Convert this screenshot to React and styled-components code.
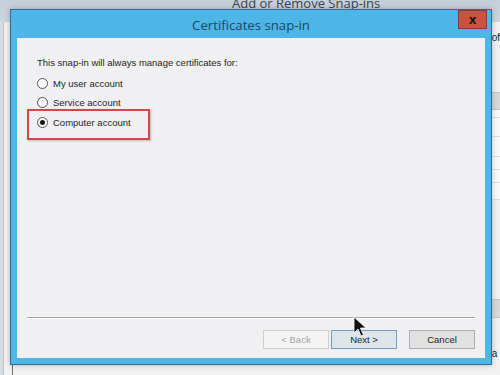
import styled, { createGlobalStyle } from "styled-components"

const GlobalStyle = createGlobalStyle`
    html, body {
        margin: 0;
        padding: 0;
        background: #eef0f2;
        font-family: "Liberation Sans", Arial, sans-serif;
    }
`

const Desktop = styled.div`
    position: relative;
    width: 500px;
    height: 375px;
    overflow: hidden;
    display: flex;
    flex-direction: column;
    background: #d6dde3;
`

const ParentTitleBar = styled.div`
    height: 22px;
    flex-shrink: 0;
    background: linear-gradient(#c4cfd9, #cdd6de);
    overflow: hidden;
`

const ParentTitle = styled.div`
    margin: -6px 0 0 232px;
    font-family: "Open Sans", "Noto Sans", sans-serif;
    font-size: 13px;
    line-height: 18px;
    color: #3a4550;
    white-space: nowrap;
`

const ParentBody = styled.div`
    flex: 1;
    display: flex;
    margin-left: 3px;
    border-left: 1px solid #b9c2ca;
    background: #f2f2f2;
`

const InnerPane = styled.div`
    width: 480px;
    margin-left: 8px;
    border-left: 1px solid #6f6f6f;
`

const RightPane = styled.div`
    flex: 1;
    display: flex;
    flex-direction: column;
    font-size: 10px;
    color: #222;
`

const SideText = styled.div`
    margin-top: ${(p) => p.$top}px;
    height: 12px;
    line-height: 12px;
    padding-left: 1px;
`

const ListHeader = styled.div`
    margin-top: 48px;
    height: 16px;
    background: #d9d9d9;
    border-top: 1px solid #c4c4c4;
    border-bottom: 1px solid #c4c4c4;
`

const ListRow = styled.div`
    height: ${(p) => p.$h}px;
    border-bottom: 1px solid #dedede;
    background: #fafafa;
`

const GreyBand = styled.div`
    margin-top: 99px;
    height: 17px;
    background: #d9d9d9;
    border-top: 1px solid #c6c6c6;
    border-bottom: 1px solid #c6c6c6;
`

const Dialog = styled.div`
    position: absolute;
    left: 10px;
    top: 9px;
    width: 468px;
    height: 348px;
    box-sizing: content-box;
    border: 1px solid #2f6d92;
    background: #4db5e7;
    display: flex;
    flex-direction: column;
    padding: 0 6px 6px 6px;
    box-shadow: 0 0 6px rgba(0, 0, 0, 0.25);
`

const TitleBar = styled.div`
    position: relative;
    height: 28px;
    flex-shrink: 0;
    display: flex;
    align-items: center;
    justify-content: center;
`

const Title = styled.div`
    font-family: "Open Sans", "Noto Sans", sans-serif;
    font-size: 13.2px;
    color: #1d4863;
    padding-top: 1px;
`

const CloseButton = styled.div`
    position: absolute;
    right: -2px;
    top: 0;
    width: 29px;
    height: 19px;
    background: #c9533f;
    border: 1px solid #8c3b2e;
    box-sizing: border-box;
    display: flex;
    align-items: center;
    justify-content: center;
    font-family: "DejaVu Sans", sans-serif;
    font-weight: bold;
    font-size: 12px;
    line-height: 1;
    color: #1a1a1a;
`

const Client = styled.div`
    flex: 1;
    background: #f0f0f2;
    display: flex;
    flex-direction: column;
    padding: 0 10px 9px 10px;
`

const Content = styled.div`
    flex: 1;
    padding: 19px 0 0 10px;
    font-size: 9.5px;
    color: #1e1e1e;
`

const Intro = styled.div`
    line-height: 12px;
    margin-bottom: 5px;
`

const RadioRow = styled.label`
    display: flex;
    align-items: center;
    gap: 5px;
    height: 19px;
`

const RadioCircle = styled.span`
    width: 11px;
    height: 11px;
    box-sizing: border-box;
    border: 1px solid #555;
    border-radius: 50%;
    background: #fdfdfd;
    display: flex;
    align-items: center;
    justify-content: center;

    &::after {
        content: "";
        width: 5px;
        height: 5px;
        border-radius: 50%;
        background: ${(p) => (p.$checked ? "#111" : "transparent")};
    }
`

const Highlight = styled.div`
    width: 123px;
    height: 31px;
    box-sizing: border-box;
    margin: -3px 0 0 -10px;
    padding: 2px 0 0 8px;
    border: 2px solid #d2494c;
    box-shadow: 1px 1px 2px rgba(120, 40, 40, 0.3);
`

const Separator = styled.div`
    height: 1px;
    background: #a8a8a8;
    border-bottom: 1px solid #ffffff;
`

const ButtonRow = styled.div`
    display: flex;
    justify-content: flex-end;
    gap: 2px;
    margin-top: 11px;
`

const Button = styled.div`
    width: 66px;
    height: 19px;
    box-sizing: border-box;
    display: flex;
    align-items: center;
    justify-content: center;
    font-size: 9.5px;
    border: 1px solid ${(p) => (p.$variant === "disabled" ? "#cfcfcf" : p.$variant === "default" ? "#6f9cc8" : "#acacac")};
    background: ${(p) => (p.$variant === "disabled" ? "#f4f4f4" : p.$variant === "default" ? "#dde4ea" : "#e1e1e1")};
    color: ${(p) => (p.$variant === "disabled" ? "#a3a3a3" : "#1e1e1e")};
    margin-left: ${(p) => (p.$gap ? "10px" : "0")};
`

const Cursor = styled.svg`
    position: absolute;
    left: 353px;
    top: 316px;
`

export default function App() {
    return (
        <>
            <GlobalStyle />
            <Desktop>
                <ParentTitleBar>
                    <ParentTitle>Add or Remove Snap-ins</ParentTitle>
                </ParentTitleBar>
                <ParentBody>
                    <InnerPane />
                    <RightPane>
                        <SideText $top={10}>of</SideText>
                        <ListHeader />
                        <ListRow $h={7} />
                        <ListRow $h={18} />
                        <ListRow $h={19} />
                        <ListRow $h={12} />
                        <ListRow $h={12} />
                        <ListRow $h={16} />
                        <GreyBand />
                        <SideText $top={30}>a</SideText>
                    </RightPane>
                </ParentBody>

                <Dialog>
                    <TitleBar>
                        <Title>Certificates snap-in</Title>
                        <CloseButton>x</CloseButton>
                    </TitleBar>
                    <Client>
                        <Content>
                            <Intro>This snap-in will always manage certificates for:</Intro>
                            <RadioRow>
                                <RadioCircle />
                                My user account
                            </RadioRow>
                            <RadioRow>
                                <RadioCircle />
                                Service account
                            </RadioRow>
                            <Highlight>
                                <RadioRow>
                                    <RadioCircle $checked />
                                    Computer account
                                </RadioRow>
                            </Highlight>
                        </Content>
                        <Separator />
                        <ButtonRow>
                            <Button $variant="disabled">&lt; Back</Button>
                            <Button $variant="default">Next &gt;</Button>
                            <Button $gap>Cancel</Button>
                        </ButtonRow>
                    </Client>
                </Dialog>

                <Cursor width="14" height="22" viewBox="0 0 14 22">
                    <path
                        d="M1 1 L1 17 L5 13 L8 20 L10.5 19 L7.5 12 L13 12 Z"
                        fill="#111"
                        stroke="#fff"
                        strokeWidth="0.8"
                    />
                </Cursor>
            </Desktop>
        </>
    )
}
